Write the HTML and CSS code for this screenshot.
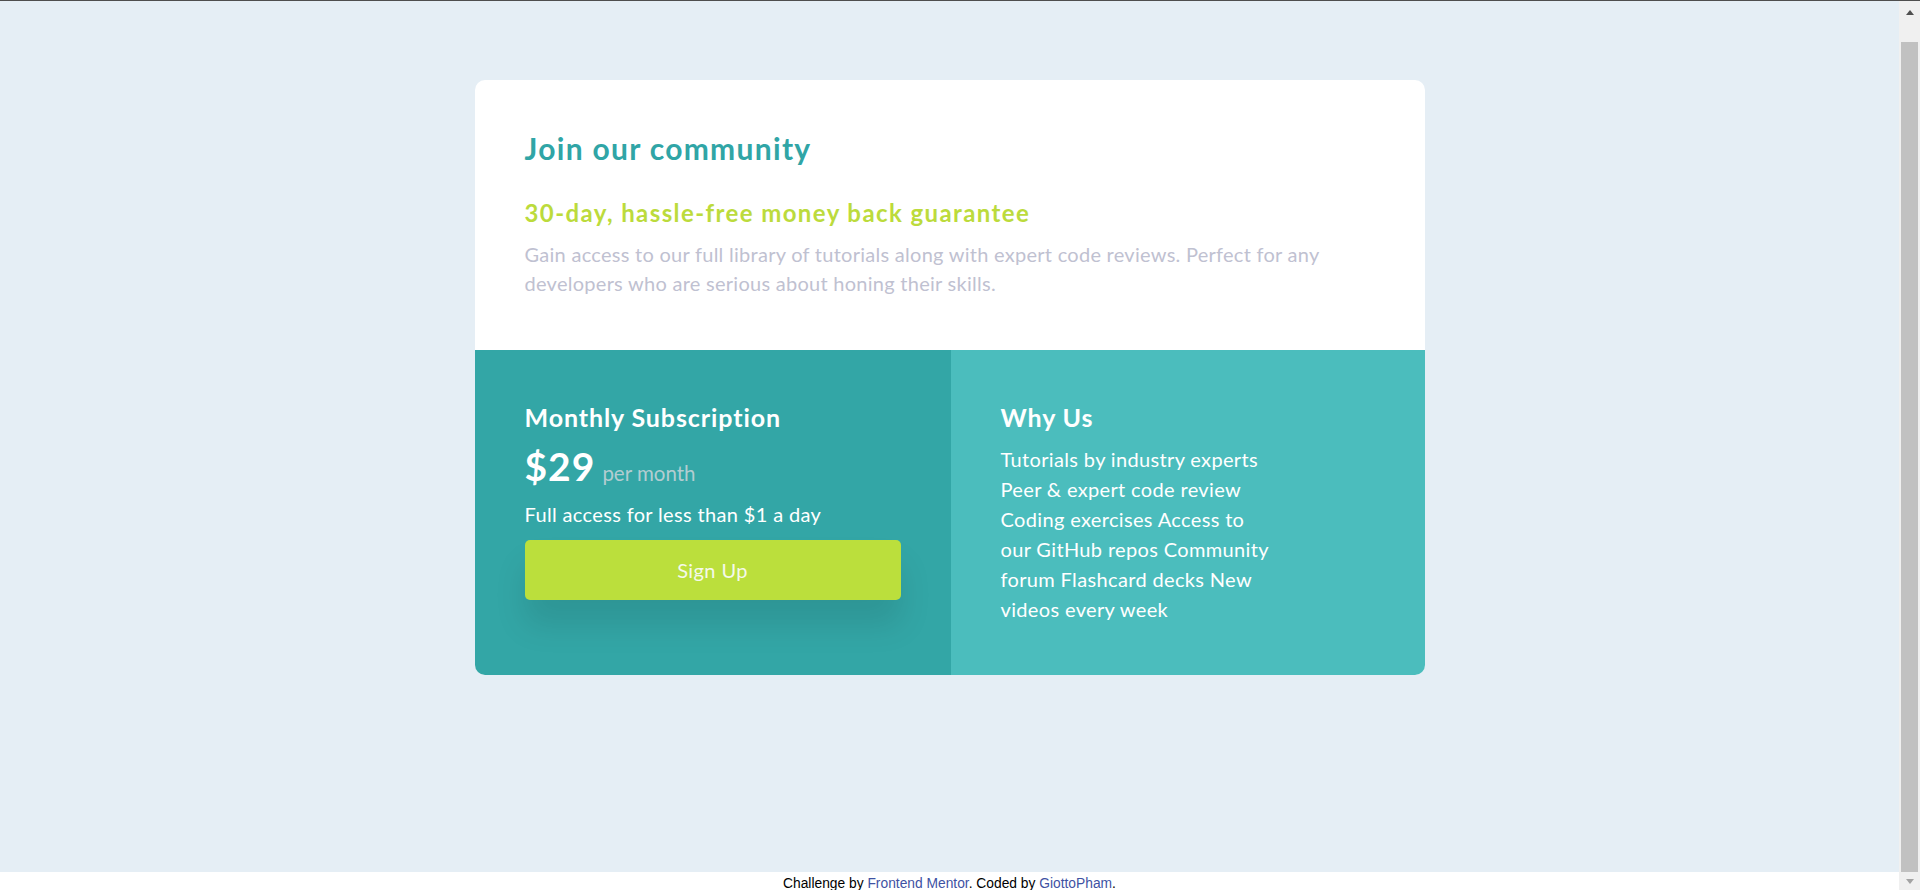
FILE: index.html
```html
<!DOCTYPE html>
<html lang="en">
<head>
<meta charset="utf-8">
<title>Single price grid component</title>
<link rel="stylesheet" href="styles.css">
</head>
<body>
<main class="page">
  <section class="card">
    <div class="intro">
      <h1 class="intro-title">Join our community</h1>
      <h2 class="intro-sub">30-day, hassle-free money back guarantee</h2>
      <p class="intro-text">Gain access to our full library of tutorials along with expert code reviews. Perfect for any developers who are serious about honing their skills.</p>
    </div>
    <div class="plans">
      <div class="panel panel-sub">
        <h3 class="panel-title">Monthly Subscription</h3>
        <div class="price"><span class="price-amount">$29</span><span class="price-period">per month</span></div>
        <p class="sub-text">Full access for less than $1 a day</p>
        <button class="signup" type="button">Sign Up</button>
      </div>
      <div class="panel panel-why">
        <h3 class="panel-title">Why Us</h3>
        <p class="why-list"><span class="why-line">Tutorials by industry experts</span><span class="why-line">Peer &amp; expert code review</span><span class="why-line">Coding exercises Access to</span><span class="why-line">our GitHub repos Community</span><span class="why-line">forum Flashcard decks New</span><span class="why-line">videos every week</span></p>
      </div>
    </div>
  </section>
</main>
<footer class="attribution">Challenge by <a href="#">Frontend Mentor</a>. Coded by <a href="#">GiottoPham</a>.</footer>
<div class="fake-scrollbar" aria-hidden="true">
  <div class="sb-up"><span class="sb-arrow-up"></span></div>
  <div class="sb-thumb"></div>
  <div class="sb-down"><span class="sb-arrow-down"></span></div>
</div>
</body>
</html>
```

FILE: styles.css
```css
html {
  background: #ffffff;
}

body {
  margin: 0;
  padding-right: 21px;
  border-top: 1px solid #4e4e4e;
  font-family: "Lato", "Liberation Sans", sans-serif;
}

.page {
  background: #e5eef5;
  min-height: 871px;
  padding-top: 79px;
  box-sizing: border-box;
}

.card {
  width: 950px;
  margin: 0 auto;
  background: #ffffff;
  border-radius: 10px;
  overflow: hidden;
}

.intro {
  padding: 50px 50px 52px;
}

.intro-title {
  margin: 0;
  font-size: 30px;
  line-height: 36px;
  letter-spacing: 1.3px;
  font-weight: 700;
  color: #30a5a6;
}

.intro-sub {
  margin: 32px 0 13px;
  font-size: 24px;
  line-height: 29px;
  letter-spacing: 1.4px;
  font-weight: 700;
  color: #bcdb3c;
}

.intro-text {
  margin: 0;
  font-size: 20px;
  line-height: 29px;
  letter-spacing: 0.27px;
  color: #bfc1d1;
}

.plans {
  display: grid;
  grid-template-columns: 476px 474px;
}

.panel {
  padding: 52px 50px 51px;
  color: #ffffff;
}

.panel-sub {
  background: #33a6a6;
}

.panel-why {
  background: #4bbdbd;
}

.panel-title {
  margin: 0 0 12px;
  font-size: 25px;
  line-height: 30px;
  letter-spacing: 0.9px;
  font-weight: 700;
}

.price {
  display: flex;
  align-items: baseline;
  gap: 7px;
  height: 44px;
}

.price-amount {
  font-size: 39px;
  line-height: 44px;
  letter-spacing: 1px;
  font-weight: 700;
}

.price-period {
  font-size: 20.5px;
  color: #b2cdd1;
}

.sub-text {
  margin: 13px 0 12px;
  font-size: 20px;
  line-height: 27px;
  letter-spacing: 0.35px;
}

.signup {
  display: block;
  width: 100%;
  height: 60px;
  border: 0;
  border-radius: 5px;
  background: #bbdf3c;
  color: #f5f9ea;
  font-family: inherit;
  font-size: 20px;
  letter-spacing: 0.4px;
  box-shadow: 0 25px 32px rgba(0, 0, 0, 0.1);
}

.why-list {
  margin: 0;
  font-size: 20px;
  line-height: 30px;
  letter-spacing: 0.35px;
}

.why-line {
  display: block;
}

.attribution {
  padding: 4px 0 17px;
  font-family: "Liberation Sans", Arial, sans-serif;
  font-size: 13.8px;
  line-height: 15px;
  text-align: center;
  color: #000000;
}

.attribution a {
  color: #3e52a3;
  text-decoration: none;
}

.fake-scrollbar {
  position: fixed;
  top: 1px;
  right: 0;
  bottom: 0;
  width: 21px;
  background: #f0f0f0;
  display: flex;
  flex-direction: column;
}

.sb-up {
  height: 41px;
  display: flex;
  justify-content: center;
  padding-top: 9px;
  box-sizing: border-box;
}

.sb-arrow-up {
  width: 0;
  height: 0;
  border-left: 4.5px solid transparent;
  border-right: 4.5px solid transparent;
  border-bottom: 5px solid #505050;
}

.sb-thumb {
  flex: 1;
  margin: 0 2px 0 2px;
  background: #c1c1c1;
}

.sb-down {
  height: 18px;
  display: flex;
  justify-content: center;
  padding-top: 7px;
  box-sizing: border-box;
}

.sb-arrow-down {
  width: 0;
  height: 0;
  border-left: 4.5px solid transparent;
  border-right: 4.5px solid transparent;
  border-top: 5px solid #a3a3a3;
}
```
